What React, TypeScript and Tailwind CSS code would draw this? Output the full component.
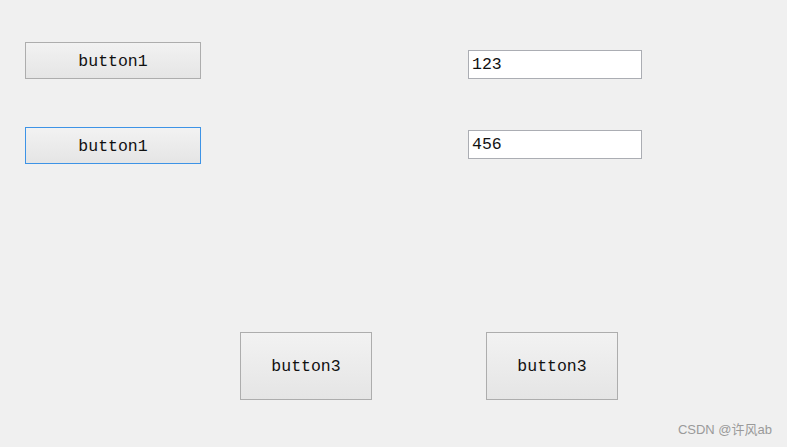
const btn =
  "flex items-center justify-center pt-[3px] bg-gradient-to-b from-[#f2f2f2] to-[#e5e5e5] border border-[#adadad] text-[16.5px] text-[#111] font-['Liberation_Mono',monospace]";

const field =
  "w-[174px] h-[29px] bg-white border border-[#abadb3] pl-[3px] text-[16.5px] text-[#111] font-['Liberation_Mono',monospace] outline-none";

export default function App() {
  return (
    <div className="relative w-[787px] h-[447px] bg-[#f0f0f0] overflow-hidden">
      <div className="flex">
        <div className="ml-[25px] mt-[42px] flex flex-col gap-[48px]">
          <button className={`${btn} w-[176px] h-[37px]`}>button1</button>
          <button className={`${btn} w-[176px] h-[37px] !border-[#3d93e6]`}>button1</button>
        </div>
        <div className="ml-[267px] mt-[50px] flex flex-col gap-[51px]">
          <input className={field} defaultValue="123" readOnly />
          <input className={field} defaultValue="456" readOnly />
        </div>
      </div>

      <div className="flex ml-[240px] mt-[168px] gap-[114px]">
        <button className={`${btn} w-[132px] h-[68px]`}>button3</button>
        <button className={`${btn} w-[132px] h-[68px]`}>button3</button>
      </div>

      <div className="absolute right-[15px] bottom-[8px] text-[13px] text-[#9a9a9a] font-['Liberation_Sans','Noto_Sans_CJK_SC',sans-serif]">
        CSDN @许风ab
      </div>
    </div>
  );
}
